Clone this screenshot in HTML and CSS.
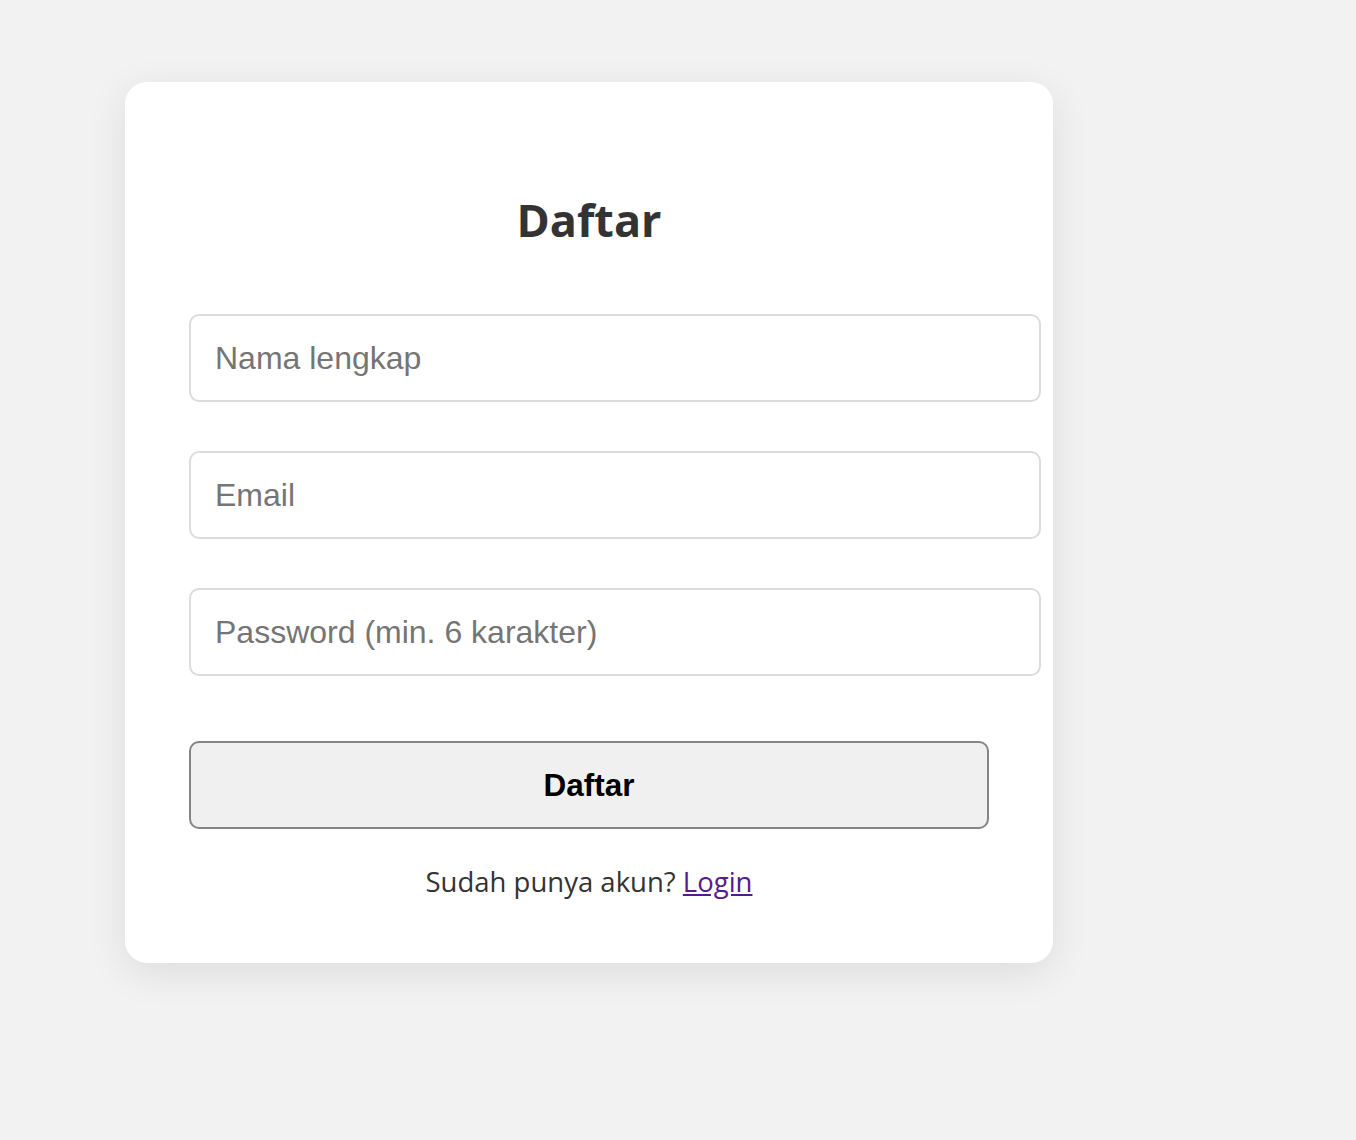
FILE: index.html
```html
<!DOCTYPE html>
<html lang="id">
<head>
<meta charset="utf-8">
<title>Daftar</title>
<link rel="stylesheet" href="styles.css">
</head>
<body>
<div class="card">
  <h1 class="title">Daftar</h1>
  <form class="form">
    <input class="field" type="text" placeholder="Nama lengkap">
    <input class="field" type="email" placeholder="Email">
    <input class="field" type="password" placeholder="Password (min. 6 karakter)">
    <button class="btn" type="button">Daftar</button>
  </form>
  <p class="foot">Sudah punya akun? <a class="link" href="#">Login</a></p>
</div>
</body>
</html>
```
FILE: styles.css
```css
html, body {
  margin: 0;
  padding: 0;
}
body {
  background: #f2f2f2;
  height: 1140px;
  font-family: "Open Sans", "Noto Sans", sans-serif;
}
.card {
  box-sizing: border-box;
  width: 928px;
  margin: 82px 0 0 125px;
  padding: 110px 64px 61px;
  background: #fff;
  border-radius: 22px;
  box-shadow: 0 10px 40px rgba(0, 0, 0, 0.09);
}
.title {
  margin: 0;
  font-size: 45px;
  line-height: 56px;
  font-weight: 700;
  color: #333;
  text-align: center;
}
.form {
  margin: 66px 0 0;
  display: flex;
  flex-direction: column;
  align-items: flex-start;
}
.field {
  box-sizing: border-box;
  width: 852px;
  height: 88px;
  margin: 0 0 49px;
  padding: 0 24px;
  border: 2px solid #dcdcdc;
  border-radius: 10px;
  background: #fff;
  font-family: "Liberation Sans", Arial, sans-serif;
  font-size: 32px;
  color: #333;
  outline: none;
}
.field::placeholder {
  color: #757575;
}
.field:nth-child(3) {
  margin-bottom: 65px;
}
.btn {
  box-sizing: border-box;
  width: 800px;
  height: 88px;
  border: 2px solid #858585;
  border-radius: 10px;
  background: #f0f0f0;
  font-family: "Liberation Sans", Arial, sans-serif;
  font-size: 31.5px;
  font-weight: 700;
  color: #000;
}
.foot {
  margin: 33px 0 0;
  width: 800px;
  text-align: center;
  font-size: 27.5px;
  line-height: 40px;
  color: #333;
}
.link {
  color: #551a8b;
}
```
